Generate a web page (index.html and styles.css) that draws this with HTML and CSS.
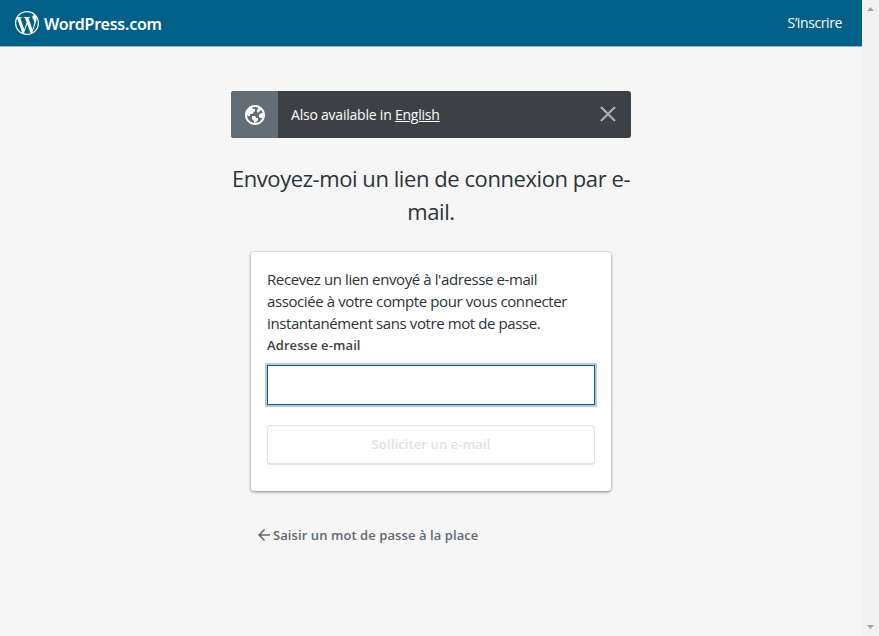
FILE: index.html
```html
<!DOCTYPE html>
<html lang="fr">
<head>
<meta charset="utf-8">
<title>WordPress.com</title>
<link rel="stylesheet" href="styles.css">
</head>
<body>
<div class="page">
  <header class="masterbar">
    <a class="brand">
      <svg class="brand-mark" viewBox="0 0 24 24"><path d="M21.469 6.825c.84 1.537 1.318 3.3 1.318 5.175 0 3.979-2.156 7.456-5.363 9.325l3.295-9.527c.615-1.54.82-2.771.82-3.864 0-.405-.026-.78-.07-1.11m-7.981.105c.647-.03 1.232-.105 1.232-.105.582-.075.514-.93-.067-.899 0 0-1.755.135-2.88.135-1.064 0-2.85-.15-2.85-.15-.585-.03-.661.855-.075.885 0 0 .54.061 1.125.09l1.68 4.605-2.37 7.08L5.354 6.9c.649-.03 1.234-.1 1.234-.1.585-.075.516-.93-.065-.896 0 0-1.746.138-2.874.138-.2 0-.438-.008-.69-.015C4.911 3.15 8.235 1.215 12 1.215c2.809 0 5.365 1.072 7.286 2.833-.046-.003-.091-.009-.141-.009-1.06 0-1.812.923-1.812 1.914 0 .89.513 1.643 1.06 2.531.411.72.89 1.643.89 2.977 0 .915-.354 1.994-.821 3.479l-1.075 3.585-3.9-11.61.001.014zM12 22.784c-1.059 0-2.081-.153-3.048-.437l3.237-9.406 3.315 9.087c.024.053.05.101.078.149-1.12.393-2.325.609-3.582.609M1.211 12c0-1.564.336-3.05.935-4.39L7.29 21.709C3.694 19.96 1.212 16.271 1.211 12M12 0C5.385 0 0 5.385 0 12s5.385 12 12 12 12-5.385 12-12S18.615 0 12 0"/></svg>
      <span class="brand-name">WordPress.com</span>
    </a>
    <a class="signup">S’inscrire</a>
  </header>
  <main class="content">
    <div class="notice">
      <span class="notice-icon"><svg viewBox="0 0 24 24"><path d="M12 2C6.477 2 2 6.477 2 12s4.477 10 10 10 10-4.477 10-10S17.523 2 12 2zm0 18l2-2 1-1v-2h-2v-1l-1-1H9v3l2 2v1.930c-3.940-.494-7-3.858-7-7.930l1 1h2v-2h2l3-3V6h-2L9 5v-.410C9.927 4.210 10.940 4 12 4s2.073.212 3 .590V6l-1 1v2l1 1 3.130-3.130c.752.897 1.304 1.964 1.606 3.130H18l-2 2v2l1 1h2l.286.286C18.030 18.060 15.240 20 12 20z"/></svg></span>
      <span class="notice-text">Also available in <a class="notice-link">English</a></span>
      <svg class="notice-close" viewBox="0 0 24 24"><path d="M19.780 5.640l-1.420-1.420L12 10.590 5.640 4.220 4.220 5.640 10.590 12l-6.370 6.360 1.420 1.420L12 13.410l6.360 6.370 1.420-1.420L13.410 12z"/></svg>
    </div>
    <h1 class="title">Envoyez-moi un lien de connexion par e-<br>mail.</h1>
    <form class="card">
      <p class="intro">Recevez un lien envoyé à l'adresse e-mail<br>associée à votre compte pour vous connecter<br>instantanément sans votre mot de passe.</p>
      <label class="label" for="email">Adresse e-mail</label>
      <input class="field" id="email" type="email">
      <button class="submit" type="button" disabled>Solliciter un e-mail</button>
    </form>
    <a class="back">
      <svg viewBox="0 0 24 24"><path d="M20 11H7.830l5.590-5.590L12 4l-8 8 8 8 1.410-1.410L7.830 13H20v-2z"/></svg>
      <span>Saisir un mot de passe à la place</span>
    </a>
  </main>
</div>
<div class="scrollbar">
  <svg viewBox="0 0 17 17"><path d="M5 11h7L8.500 7z"/></svg>
  <svg viewBox="0 0 17 17"><path d="M5 6h7l-3.500 4z"/></svg>
</div>
</body>
</html>
```
FILE: styles.css
```css
* { box-sizing: border-box; }
body {
  margin: 0;
  height: 636px;
  display: flex;
  overflow: hidden;
  background: #f6f6f6;
  color: #2c3338;
  font-family: "Open Sans", "Noto Sans", sans-serif;
}
svg { display: block; fill: currentColor; flex: none; }
.page { width: 862px; }
.masterbar {
  height: 47px;
  padding: 0 20px 0 15px;
  display: flex;
  justify-content: space-between;
  align-items: center;
  background: #016087;
  border-bottom: 1px solid #a3b4b9;
  color: #fff;
}
.brand { display: flex; align-items: center; gap: 5px; }
.brand-mark { width: 24px; height: 24px; }
.brand-name { padding-top: 1px; font: 600 16px/24px "Noto Sans", sans-serif; letter-spacing: -.23px; }
.signup { font-size: 14px; line-height: 20px; letter-spacing: -.4px; }
.content { width: 400px; margin: 44px auto 0; }
.notice {
  height: 47px;
  display: flex;
  align-items: center;
  background: #3d4145;
  border-radius: 3px;
  overflow: hidden;
  color: #fff;
}
.notice-icon {
  width: 47px;
  height: 47px;
  padding: 12px 12px 11px;
  background: #636d75;
}
.notice-icon svg { width: 24px; height: 24px; }
.notice-text { flex: 1; padding: 0 0 1px 13px; font-size: 14px; line-height: 21px; white-space: nowrap; letter-spacing: -.22px; }
.notice-link { text-decoration: underline; }
.notice-close { width: 24px; height: 24px; margin: 0 11px 1px 0; color: #b1b3b5; }
.title {
  margin: 24px 0 0;
  font-size: 22px;
  line-height: 33px;
  font-weight: 400;
  text-align: center;
  white-space: nowrap;
  letter-spacing: -.43px;
}
.card {
  width: 360px;
  height: 239px;
  margin: 24px 20px 0;
  padding: 16px 16px 0;
  background: #fff;
  border-radius: 3px;
  box-shadow: 0 0 3px rgba(0, 0, 0, .12), 0 1px 3px rgba(0, 0, 0, .42);
}
.intro { margin: 0; font-size: 15px; line-height: 22px; white-space: nowrap; letter-spacing: -.4px; }
.label { display: block; padding-top: 1px; font-size: 13px; line-height: 20px; font-weight: 600; color: #3d4145; letter-spacing: .1px; }
.field {
  display: block;
  width: 328px;
  height: 40px;
  margin: 10px 0 0;
  background: #fff;
  border: 1px solid #016087;
  border-radius: 0;
  outline: none;
  box-shadow: 0 0 0 2px #b7c9d5;
}
.submit {
  display: block;
  width: 328px;
  height: 40px;
  margin: 20px 0 0;
  padding: 0 0 2px;
  background: #fff;
  border: 1px solid #e1e2e2;
  border-bottom-width: 2px;
  border-radius: 4px;
  color: #e1e2e2;
  font: 600 13px/20px "Open Sans", sans-serif;
  letter-spacing: .12px;
}
.back {
  display: flex;
  align-items: center;
  margin: 34px 0 0 24px;
  color: #646970;
  font-size: 13px;
  line-height: 20px;
  font-weight: 600;
  white-space: nowrap;
  letter-spacing: .08px;
}
.back svg { width: 18px; height: 18px; }
.scrollbar {
  width: 17px;
  display: flex;
  flex-direction: column;
  justify-content: space-between;
  background: #f1f1f1;
  color: #a3a3a3;
}
.scrollbar svg { width: 17px; height: 17px; }
```
